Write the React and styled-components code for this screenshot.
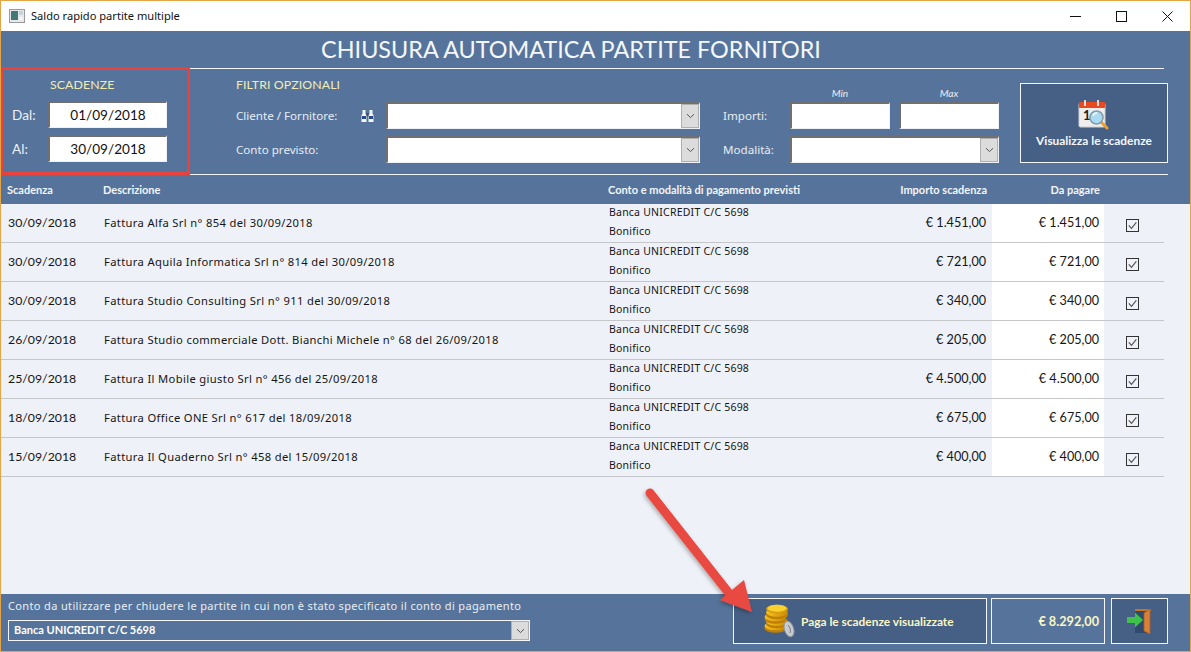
import React from 'react';
import styled, { createGlobalStyle } from 'styled-components';

const Global = createGlobalStyle`
  html, body { margin: 0; padding: 0; background: #eef1f7; }
  * { box-sizing: border-box; }
  body { font-family: "Noto Sans", "Liberation Sans", sans-serif; }
`;

const Win = styled.div`
  position: relative;
  width: 1191px;
  height: 652px;
  display: flex;
  flex-direction: column;
  border: 1px solid #e5a445;
  background: #eef1f7;
  overflow: hidden;
`;
const TitleBar = styled.div`
  height: 30px;
  flex: none;
  background: #fff;
  display: flex;
  align-items: center;
  padding-left: 8px;
  gap: 6px;
  font-family: "Noto Sans", sans-serif;
  font-size: 11.1px;
  color: #111;
`;
const TitleText = styled.span`
  flex: 1;
  margin-top: -1px;
`;
const WinControls = styled.div`
  display: flex;
  height: 100%;
  align-items: center;
`;
const WinCtl = styled.div`
  width: 46px;
  height: 100%;
  display: flex;
  align-items: center;
  justify-content: center;
`;
const Header = styled.header`
  flex: none;
  background: #56749b;
  height: 144px;
  display: flex;
  flex-direction: column;
`;
const MainTitle = styled.h1`
  margin: 0;
  height: 36px;
  flex: none;
  width: 1140px;
  text-align: center;
  color: #f4f8fc;
  font-family: Lato, sans-serif;
  font-weight: 400;
  font-size: 23.4px;
  line-height: 37px;
`;
const Band = styled.div`
  display: flex;
  flex: none;
  height: 108px;
`;
const RedPanel = styled.section`
  width: 190px;
  margin-left: -1px;
  flex: none;
  border: 3px solid #e8423c;
  display: grid;
  grid-template-columns: 43px 119px;
  grid-template-rows: 24px 27px 27px;
  row-gap: 7px;
  padding-left: 2px;
`;
const Gold = styled.div`
  color: #f2edb4;
  font-family: Lato, sans-serif;
  font-size: 12.3px;
  line-height: ${p => p.$lh}px;
  letter-spacing: 0.1px;
  grid-column: ${p => p.$col || 'auto'};
  margin-left: ${p => p.$ml || 0}px;
`;
const DateLabel = styled.label`
  color: #eaf0f6;
  font-family: Lato, sans-serif;
  font-size: 13.6px;
  line-height: 29px;
  padding-left: 7px;
`;
const Field = styled.div`
  height: 27px;
  background: #fff;
  border-style: solid;
  border-width: 2px 1px 1px 2px;
  border-color: #707070 #eef1f5 #eef1f5 #707070;
  display: flex;
  align-items: center;
  justify-content: ${p => p.$center ? 'center' : 'flex-start'};
  font-family: Lato, sans-serif;
  font-size: 13.6px;
  color: #111;
  grid-column: ${p => p.$col || 'auto'};
  position: relative;
`;
const ComboBtn = styled.span`
  position: absolute;
  right: 0;
  top: 0;
  bottom: 0;
  width: 18px;
  background: #dcdcdc;
  border: 1px solid #b0b0b0;
  display: flex;
  align-items: center;
  justify-content: center;
`;
const Chevron = () => (
  <svg width="9" height="6" viewBox="0 0 9 6"><path d="M1 1.2 4.5 4.6 8 1.2" fill="none" stroke="#555" strokeWidth="1" /></svg>
);
const FilterZone = styled.div`
  flex: none;
  width: 974px;
  height: 107px;
  margin-top: 1px;
  display: flex;
  border-top: 1px solid #f3f6fa;
  position: relative;
  &::after {
    content: "";
    position: absolute;
    left: 0;
    bottom: 0;
    width: 978px;
    height: 1px;
    background: #f3f6fa;
  }
`;
const FilterGrid = styled.div`
  display: grid;
  grid-template-columns: 150px 314px 23px 67px 100px 9px 100px;
  grid-template-rows: 26px 27px 27px;
  row-gap: 7px;
  padding-left: 46px;
  height: 100px;
`;
const FLabel = styled.div`
  color: #e6edf4;
  font-family: "Noto Sans", sans-serif;
  font-size: 11.6px;
  line-height: 27px;
  display: flex;
  align-items: center;
  justify-content: space-between;
  padding-right: 11px;
  grid-column: ${p => p.$col || 'auto'};
`;
const Hint = styled.div`
  color: #e6edf4;
  font-family: Lato, sans-serif;
  font-style: italic;
  font-size: 10.2px;
  text-align: center;
  align-self: end;
  margin-bottom: -4px;
  grid-column: ${p => p.$col};
`;
const ActionBtn = styled.button`
  background: #466085;
  border: 1px solid #f4f6fa;
  color: ${p => p.$gold ? '#fbf6c4' : '#f4f8fc'};
  font-family: Lato, sans-serif;
  font-weight: 700;
  font-size: 11.9px;
  padding: 0;
  flex: none;
`;
const ViewBtn = styled(ActionBtn)`
  width: 148px;
  height: 80px;
  margin-left: 21px;
  margin-top: 14px;
  display: flex;
  flex-direction: column;
  align-items: center;
  padding-top: 15px;
  gap: 3px;
`;
const TableHead = styled.div`
  background: #56749b;
  height: 29px;
  flex: none;
  display: grid;
  grid-template-columns: 102px 505px 272px 112px 112px 60px;
  align-items: center;
  color: #f2f5f9;
  font-family: Lato, sans-serif;
  font-weight: 700;
  font-size: 11px;
`;
const HCell = styled.div`
  padding-left: ${p => p.$pl ?? 0}px;
  padding-right: ${p => p.$pr ?? 0}px;
  text-align: ${p => p.$right ? 'right' : 'left'};
`;
const Rows = styled.div`
  flex: 1;
  min-height: 0;
`;
const Row = styled.div`
  height: 39px;
  width: 1163px;
  display: grid;
  grid-template-columns: 102px 505px 272px 112px 112px 60px;
  align-items: stretch;
  border-bottom: 1px solid #c4c6c9;
  color: #151515;
  font-family: "Noto Sans", sans-serif;
  font-size: 11.2px;
  letter-spacing: 0.35px;
`;
const Cell = styled.div`
  display: flex;
  align-items: center;
  padding-left: ${p => p.$pl ?? 0}px;
  padding-bottom: 2px;
  white-space: nowrap;
`;
const DateCell = styled(Cell)`
  font-family: Lato, sans-serif;
  font-size: 12.3px;
  letter-spacing: 0;
`;
const AccountCell = styled.div`
  line-height: 19px;
  padding-left: 1px;
  font-size: 10.5px;
  letter-spacing: 0.22px;
  margin-top: -1px;
  white-space: nowrap;
`;
const Amount = styled.div`
  display: flex;
  align-items: center;
  justify-content: flex-end;
  padding-right: ${p => p.$pr}px;
  padding-bottom: 2px;
  font-family: Lato, sans-serif;
  font-size: 12.6px;
  letter-spacing: 0;
  background: ${p => p.$white ? '#fff' : 'transparent'};
`;
const CheckCell = styled.div`
  display: flex;
  align-items: center;
  justify-content: center;
  padding-top: 4px;
  padding-right: 3px;
`;
const Footer = styled.footer`
  flex: none;
  height: 57px;
  background: #56749b;
  display: flex;
`;
const FooterLeft = styled.div`
  width: 732px;
  flex: none;
  padding-left: 7px;
  padding-top: 4px;
`;
const FootNote = styled.div`
  color: #e8eef5;
  font-family: "Noto Sans", sans-serif;
  font-size: 11px;
  letter-spacing: 0.36px;
  line-height: 15px;
  white-space: nowrap;
`;
const AccountSelect = styled.div`
  margin-top: 7px;
  width: 522px;
  height: 21px;
  border: 1px solid #f4f6fa;
  color: #fff;
  font-family: Lato, sans-serif;
  font-weight: 700;
  font-size: 11px;
  line-height: 18px;
  padding-left: 5px;
  position: relative;
`;
const FooterBtns = styled.div`
  display: flex;
  padding-top: 4px;
  height: 50px;
`;
const PayBtn = styled(ActionBtn)`
  width: 254px;
  display: flex;
  align-items: center;
  padding-left: 29px;
  gap: 6px;
`;
const TotalBox = styled.div`
  width: 114px;
  margin-left: 4px;
  border: 1px solid #f4f6fa;
  color: #fbf6c4;
  font-family: Lato, sans-serif;
  font-weight: 700;
  font-size: 12.7px;
  display: flex;
  align-items: center;
  justify-content: flex-end;
  padding-right: 5px;
`;
const ExitBtn = styled(ActionBtn)`
  width: 57px;
  margin-left: 6px;
  display: flex;
  align-items: center;
  justify-content: center;
`;
const Arrow = styled.svg`
  position: absolute;
  left: -1px;
  top: -1px;
  pointer-events: none;
`;

const AppIcon = () => (
  <svg width="16" height="14" viewBox="0 0 16 14">
    <rect x=".5" y=".5" width="15" height="13" fill="#e8e8e8" stroke="#9a9a9a" />
    <rect x="2" y="2" width="7" height="9" fill="#3f7a76" />
    <rect x="10" y="2" width="4" height="4" fill="#c9d2dc" />
    <rect x="10" y="8" width="4" height="3" fill="#f4f4f4" />
  </svg>
);
const Binoculars = () => (
  <svg width="15" height="14" viewBox="0 0 15 14">
    <path d="M2.5 1h3v4l1 1v7h-5V6l1-1zM9.5 1h3v4l1 1v7h-5V6l1-1z" fill="#f3f5f9" />
    <path d="M2 7h4v3H2zM9 7h4v3H9z" fill="#2b4a86" />
    <rect x="6.4" y="4" width="2.2" height="3" fill="#33518a" />
  </svg>
);
const CalendarIcon = () => (
  <svg width="32" height="31" viewBox="0 0 32 31">
    <rect x="1" y="4" width="26" height="24" rx="1.5" fill="#eeeeee" stroke="#d0d0d0" />
    <rect x="1" y="3" width="26" height="6" rx="1" fill="#e8491f" />
    <rect x="6" y="1" width="2" height="6" fill="#ddd" />
    <rect x="19" y="1" width="2" height="6" fill="#ddd" />
    <text x="5" y="21" fontFamily="Lato, sans-serif" fontSize="13" fontWeight="700" fill="#222">1</text>
    <path d="m23 23 6 6" stroke="#e8a030" strokeWidth="3" strokeLinecap="round" />
    <circle cx="18.5" cy="18.5" r="6.5" fill="#a9dbf2" stroke="#8a9aa6" strokeWidth="1.6" />
    <path d="M15 17a4 4 0 0 1 4-3" stroke="#fff" strokeWidth="1.4" fill="none" />
  </svg>
);
const CoinsIcon = () => (
  <svg width="32" height="34" viewBox="0 0 32 34">
    <defs>
      <linearGradient id="g" x1="0" x2="1"><stop offset="0" stopColor="#f6c21c" /><stop offset="1" stopColor="#c98a08" /></linearGradient>
    </defs>
    {[22, 17.5, 13, 8.5].map((y, i) => (
      <g key={y}>
        <ellipse cx={i % 2 ? 14 : 12.5} cy={y + 2.5} rx="11" ry="4.2" fill="#c07f05" />
        <ellipse cx={i % 2 ? 14 : 12.5} cy={y} rx="11" ry="4.2" fill="url(#g)" />
      </g>
    ))}
    <ellipse cx="14" cy="5" rx="11" ry="4.2" fill="#d99b0c" />
    <ellipse cx="14" cy="4.2" rx="9.5" ry="3.5" fill="#f8d030" />
    <ellipse cx="26" cy="25" rx="4.6" ry="8" transform="rotate(-18 26 25)" fill="#c8ccd2" stroke="#8f949a" />
    <path d="M25 21c2 2 3 5 2 8" stroke="#777" strokeWidth="1" fill="none" />
  </svg>
);
const DoorIcon = () => (
  <svg width="28" height="27" viewBox="0 0 28 27">
    <path d="M9 1h15v24H9z" fill="#2f4a6c" />
    <path d="M9 1h16v2H9z" fill="#c87428" />
    <path d="M24 1v25l-6-3V5l6-4z" fill="#d8803a" stroke="#a85f22" strokeWidth=".8" />
    <path d="M1 9h8V4.5L17 12l-8 7.5V15H1z" fill="#3fc24a" />
  </svg>
);
const Check = () => (
  <svg width="13" height="13" viewBox="0 0 13 13">
    <rect x=".5" y=".5" width="12" height="12" fill="none" stroke="#333" />
    <path d="m2.8 6.3 2.7 3 4.8-6" fill="none" stroke="#555" strokeWidth="1.2" />
  </svg>
);

const rows = [
  ['30/09/2018', 'Fattura Alfa Srl n° 854 del 30/09/2018', '€ 1.451,00'],
  ['30/09/2018', 'Fattura Aquila Informatica Srl n° 814 del 30/09/2018', '€ 721,00'],
  ['30/09/2018', 'Fattura Studio Consulting Srl n° 911 del 30/09/2018', '€ 340,00'],
  ['26/09/2018', 'Fattura Studio commerciale Dott. Bianchi Michele n° 68 del 26/09/2018', '€ 205,00'],
  ['25/09/2018', 'Fattura Il Mobile giusto Srl n° 456 del 25/09/2018', '€ 4.500,00'],
  ['18/09/2018', 'Fattura Office ONE Srl n° 617 del 18/09/2018', '€ 675,00'],
  ['15/09/2018', 'Fattura Il Quaderno Srl n° 458 del 15/09/2018', '€ 400,00'],
];

export default function App() {
  return (
    <Win>
      <Global />
      <TitleBar>
        <AppIcon />
        <TitleText>Saldo rapido partite multiple</TitleText>
        <WinControls>
          <WinCtl><svg width="11" height="11"><path d="M0 5.5h11" stroke="#111" /></svg></WinCtl>
          <WinCtl><svg width="11" height="11"><rect x=".5" y=".5" width="10" height="10" fill="none" stroke="#111" /></svg></WinCtl>
          <WinCtl><svg width="11" height="11"><path d="m.5.5 10 10m0-10-10 10" stroke="#111" /></svg></WinCtl>
        </WinControls>
      </TitleBar>
      <Header>
        <MainTitle>CHIUSURA AUTOMATICA PARTITE FORNITORI</MainTitle>
        <Band>
          <RedPanel>
            <Gold $col="1 / 3" $ml={45} $lh={30}>SCADENZE</Gold>
            <DateLabel>Dal:</DateLabel>
            <Field $center>01/09/2018</Field>
            <DateLabel>Al:</DateLabel>
            <Field $center>30/09/2018</Field>
          </RedPanel>
          <FilterZone>
            <FilterGrid>
              <Gold $col="1 / 3" $lh={32}>FILTRI OPZIONALI</Gold>
              <Hint $col="5">Min</Hint>
              <Hint $col="7">Max</Hint>
              <FLabel>Cliente / Fornitore: <Binoculars /></FLabel>
              <Field><ComboBtn><Chevron /></ComboBtn></Field>
              <FLabel $col="4">Importi:</FLabel>
              <Field $col="5" />
              <Field $col="7" />
              <FLabel>Conto previsto:</FLabel>
              <Field><ComboBtn><Chevron /></ComboBtn></Field>
              <FLabel $col="4">Modalità:</FLabel>
              <Field $col="5 / 8"><ComboBtn><Chevron /></ComboBtn></Field>
            </FilterGrid>
            <ViewBtn><CalendarIcon />Visualizza le scadenze</ViewBtn>
          </FilterZone>
        </Band>
      </Header>
      <TableHead>
        <HCell $pl={6}>Scadenza</HCell>
        <HCell>Descrizione</HCell>
        <HCell>Conto e modalità di pagamento previsti</HCell>
        <HCell $right $pr={5}>Importo scadenza</HCell>
        <HCell $right $pr={4}>Da pagare</HCell>
        <HCell />
      </TableHead>
      <Rows>
        {rows.map((r, i) => (
          <Row key={i}>
            <DateCell $pl={7}>{r[0]}</DateCell>
            <Cell $pl={1}>{r[1]}</Cell>
            <AccountCell>Banca UNICREDIT C/C 5698<br />Bonifico</AccountCell>
            <Amount $pr={6}>{r[2]}</Amount>
            <Amount $white $pr={5}>{r[2]}</Amount>
            <CheckCell><Check /></CheckCell>
          </Row>
        ))}
      </Rows>
      <Footer>
        <FooterLeft>
          <FootNote>Conto da utilizzare per chiudere le partite in cui non è stato specificato il conto di pagamento</FootNote>
          <AccountSelect>Banca UNICREDIT C/C 5698<ComboBtn><Chevron /></ComboBtn></AccountSelect>
        </FooterLeft>
        <FooterBtns>
          <PayBtn $gold><CoinsIcon />Paga le scadenze visualizzate</PayBtn>
          <TotalBox>€ 8.292,00</TotalBox>
          <ExitBtn><DoorIcon /></ExitBtn>
        </FooterBtns>
      </Footer>
      <Arrow width="1191" height="652" viewBox="0 0 1191 652">
        <defs>
          <filter id="s" x="-20%" y="-20%" width="140%" height="140%"><feDropShadow dx="-1" dy="2" stdDeviation="2" floodColor="#000" floodOpacity=".3" /></filter>
        </defs>
        <g filter="url(#s)" fill="#e8483f">
          <path d="M650 493 728 592" stroke="#e8483f" strokeWidth="9" strokeLinecap="round" />
          <path d="M720 600 744 580 752 612z" />
        </g>
      </Arrow>
    </Win>
  );
}
